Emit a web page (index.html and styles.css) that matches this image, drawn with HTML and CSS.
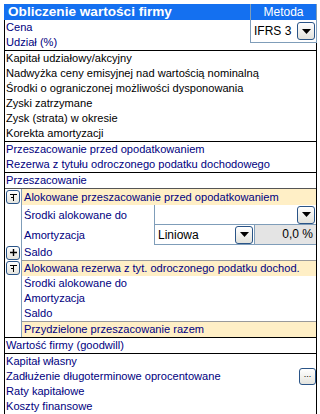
FILE: index.html
```html
<!DOCTYPE html>
<html lang="pl">
<head>
<meta charset="utf-8">
<title>Obliczenie wartości firmy</title>
<link rel="stylesheet" href="styles.css">
</head>
<body>
<div class="panel">
  <div class="top">
    <div class="top-left">
      <div class="title">Obliczenie wartości firmy</div>
      <div class="row navy">Cena</div>
      <div class="row navy">Udział (%)</div>
    </div>
    <div class="method">
      <div class="method-head">Metoda</div>
      <div class="method-body">
        <span class="method-val">IFRS 3</span>
        <span class="ddbtn"><svg width="9" height="5" viewBox="0 0 9 5"><path d="M0 0H9L4.5 5Z" fill="#000"/></svg></span>
      </div>
    </div>
  </div>

  <div class="group">
    <div class="row">Kapitał udziałowy/akcyjny</div>
    <div class="row">Nadwyżka ceny emisyjnej nad wartością nominalną</div>
    <div class="row">Środki o ograniczonej możliwości dysponowania</div>
    <div class="row">Zyski zatrzymane</div>
    <div class="row">Zysk (strata) w okresie</div>
    <div class="row">Korekta amortyzacji</div>
  </div>

  <div class="group">
    <div class="row navy">Przeszacowanie przed opodatkowaniem</div>
    <div class="row navy">Rezerwa z tytułu odroczonego podatku dochodowego</div>
  </div>

  <div class="group">
    <div class="row navy">Przeszacowanie</div>

    <div class="srow hl first">
      <div class="gutter"><span class="tbtn"><svg width="9" height="9" viewBox="0 0 9 9"><path d="M1 1.5H8M4.5 1.5V8M2 4.5H4.5" stroke="#000" stroke-width="1" fill="none"/></svg></span></div>
      <div class="cell navy">Alokowane przeszacowanie przed opodatkowaniem</div>
    </div>
    <div class="srow tall">
      <div class="gutter"></div>
      <div class="cell navy split">
        <span class="lbl">Środki alokowane do</span>
        <div class="ctrl top-ctrl">
          <span class="fill"></span>
          <span class="ddbtn"><svg width="9" height="5" viewBox="0 0 9 5"><path d="M0 0H9L4.5 5Z" fill="#000"/></svg></span>
        </div>
      </div>
    </div>
    <div class="srow tall">
      <div class="gutter"></div>
      <div class="cell navy split">
        <span class="lbl">Amortyzacja</span>
        <div class="ctrl">
          <div class="combo">
            <span class="combo-val">Liniowa</span>
            <span class="ddbtn"><svg width="9" height="5" viewBox="0 0 9 5"><path d="M0 0H9L4.5 5Z" fill="#000"/></svg></span>
          </div>
          <div class="pct">0,0 %</div>
        </div>
      </div>
    </div>
    <div class="srow">
      <div class="gutter"><span class="tbtn"><svg width="9" height="9" viewBox="0 0 9 9"><path d="M1 4.5H8M4.5 1V8" stroke="#000" stroke-width="1.4" fill="none"/></svg></span></div>
      <div class="cell navy">Saldo</div>
    </div>

    <div class="srow hl">
      <div class="gutter"><span class="tbtn"><svg width="9" height="9" viewBox="0 0 9 9"><path d="M1 1.5H8M4.5 1.5V8M2 4.5H4.5" stroke="#000" stroke-width="1" fill="none"/></svg></span></div>
      <div class="cell navy">Alokowana rezerwa z tyt. odroczonego podatku dochod.</div>
    </div>
    <div class="srow">
      <div class="gutter"></div>
      <div class="cell navy">Środki alokowane do</div>
    </div>
    <div class="srow">
      <div class="gutter"></div>
      <div class="cell navy">Amortyzacja</div>
    </div>
    <div class="srow">
      <div class="gutter"></div>
      <div class="cell navy">Saldo</div>
    </div>
    <div class="srow hl">
      <div class="gutter"></div>
      <div class="cell navy">Przydzielone przeszacowanie razem</div>
    </div>
  </div>

  <div class="group">
    <div class="row navy">Wartość firmy (goodwill)</div>
  </div>

  <div class="group last">
    <div class="row navy">Kapitał własny</div>
    <div class="row navy with-btn">
      <span>Zadłużenie długoterminowe oprocentowane</span>
      <span class="dots">...</span>
    </div>
    <div class="row navy">Raty kapitałowe</div>
    <div class="row navy">Koszty finansowe</div>
  </div>
</div>
</body>
</html>
```

FILE: styles.css
```css
html, body {
  margin: 0;
  padding: 0;
  background: #fff;
}
body {
  padding: 4px 0 0 4px;
  font-family: "Liberation Sans", Arial, sans-serif;
  font-size: 11.1px;
  color: #000;
}
.panel {
  width: 311px;
  border-left: 1px solid #000;
  border-right: 1px solid #000;
}
.top {
  display: flex;
  align-items: flex-start;
  height: 46px;
}
.top-left {
  flex: 1;
  margin-left: -1px;
}
.title {
  height: 16px;
  line-height: 16px;
  background: #1470f0;
  color: #fff;
  font-weight: bold;
  font-size: 13.6px;
  padding-left: 3px;
  border-left: 1px solid #1470f0;
}
.top-left .row {
  border-left: 1px solid #000;
}
.method {
  width: 65px;
  margin-right: -1px;
  border: 1px solid #7f9db9;
  border-top: 0;
  background: #fff;
  position: relative;
}
.method-head {
  height: 16px;
  line-height: 16px;
  background: #1470f0;
  color: #fff;
  text-align: center;
  font-size: 12px;
}
.method-body {
  height: 22px;
  display: flex;
  align-items: center;
  justify-content: space-between;
  padding: 0 1px 0 3px;
  font-size: 12px;
}
.row {
  height: 15px;
  line-height: 15px;
  padding-left: 1px;
  white-space: nowrap;
}
.navy {
  color: #000080;
}
.group {
  border-top: 1px solid #000;
}
.group.last {
  border-bottom: 1px solid #000;
}
.srow {
  display: flex;
  height: 15px;
}
.srow.tall {
  height: 20px;
}
.srow.hl {
  height: 16px;
}
.gutter {
  width: 16px;
  display: flex;
  align-items: center;
  justify-content: center;
}
.cell {
  flex: 1;
  border-left: 1px solid #7f9db9;
  padding-left: 2px;
  line-height: 15px;
  white-space: nowrap;
}
.srow.hl .cell {
  background: #ffefc6;
  border-top: 1px solid #9a9a9a;
}
.srow.hl.first {
  border-top: 1px solid #555;
}
.srow.hl.first .cell {
  border-top: 0;
  line-height: 16px;
}
.srow.tall .cell {
  line-height: 20px;
}
.split {
  display: flex;
  padding-left: 0;
}
.lbl {
  width: 130px;
  padding-left: 2px;
}
.ctrl {
  flex: 1;
  display: flex;
  border-left: 1px solid #7f9db9;
  border-bottom: 1px solid #7f9db9;
  height: 19px;
}
.top-ctrl {
  align-items: center;
  padding-right: 1px;
}
.fill {
  flex: 1;
}
.combo {
  width: 95px;
  border-right: 1px solid #7f9db9;
  display: flex;
  align-items: center;
  justify-content: space-between;
  padding: 0 1px 0 3px;
  color: #000;
  font-size: 12px;
}
.pct {
  flex: 1;
  background: #e4e4e4;
  text-align: right;
  padding-right: 3px;
  color: #000;
  line-height: 19px;
  font-size: 12px;
}
.ddbtn {
  width: 16px;
  height: 16px;
  border: 1px solid #2a5487;
  border-radius: 3px;
  background: linear-gradient(#ffffff, #e2e2dc);
  display: flex;
  align-items: center;
  justify-content: center;
  box-sizing: content-box;
}
.tbtn {
  width: 12px;
  height: 12px;
  border: 1px solid #2a5487;
  border-radius: 3px;
  background: linear-gradient(#ffffff, #e4e4de);
  display: flex;
  align-items: center;
  justify-content: center;
}
.with-btn {
  display: flex;
  align-items: center;
  justify-content: space-between;
}
.dots {
  width: 15px;
  height: 15px;
  border: 1px solid #2a5487;
  border-radius: 3px;
  background: linear-gradient(#ffffff, #e4e4de);
  font-size: 9px;
  line-height: 10px;
  text-align: center;
  color: #000;
}
```
